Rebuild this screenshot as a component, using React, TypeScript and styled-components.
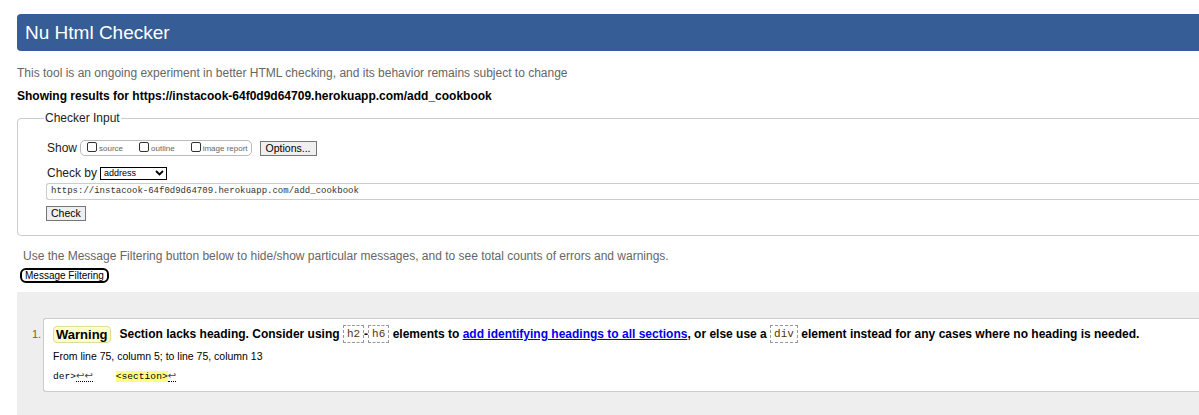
import React from "react";
import styled, { createGlobalStyle } from "styled-components";

const Global = createGlobalStyle`
  html, body { margin: 0; padding: 0; background: #fff; overflow: hidden; }
  body { font-family: "Liberation Sans", Arial, sans-serif; width: 1199px; height: 415px; }
`;

const Page = styled.div`
  width: 1300px;
  padding: 14px 0 0 17px;
  box-sizing: border-box;
`;

const Header = styled.h1`
  margin: 0;
  height: 37px;
  background: #365d95;
  border-radius: 4px 0 0 4px;
  color: #fff;
  font-size: 19px;
  font-weight: normal;
  line-height: 37px;
  padding-left: 8px;
`;

const Intro = styled.p`
  margin: 15px 0 0 0;
  font-size: 12px;
  color: #666;
  line-height: 14px;
`;

const Results = styled.p`
  margin: 9px 0 0 0;
  font-size: 12px;
  font-weight: bold;
  color: #000;
  line-height: 14px;
`;

const Fieldset = styled.fieldset`
  margin: 8px 0 0 0;
  border: 1px solid #ccc;
  border-radius: 4px;
  padding: 6px 0 14px 29px;
  min-width: 0;
`;

const Legend = styled.legend`
  font-size: 12px;
  color: #222;
  margin-left: -3px;
  padding: 0 1px;
`;

const Row = styled.div<{ $mt?: number }>`
  display: flex;
  align-items: center;
  margin-top: ${(p) => p.$mt ?? 0}px;
`;

const Label = styled.span`
  font-size: 12px;
  color: #222;
  margin-right: 3px;
`;

const CheckGroup = styled.span`
  display: inline-flex;
  align-items: center;
  border: 1px solid #bbb;
  border-radius: 5px;
  height: 14px;
  padding: 0 3px 0 6px;
  gap: 16px;
  margin-right: 8px;
`;

const CheckItem = styled.label`
  display: inline-flex;
  align-items: center;
  font-size: 8px;
  color: #666;
`;

const Box = styled.span`
  display: inline-block;
  width: 8px;
  height: 8px;
  border: 1px solid #333;
  border-radius: 2px;
  margin-right: 2px;
  position: relative;
  top: -1px;
`;

const Btn = styled.button`
  font-family: "Liberation Sans", Arial, sans-serif;
  font-size: 10.5px;
  color: #000;
  background: #efefef;
  border: 1px solid #767676;
  border-radius: 0;
  padding: 0 5px;
  height: 15px;
  line-height: 13px;
`;

const Select = styled.span`
  display: inline-flex;
  align-items: center;
  justify-content: space-between;
  width: 60px;
  height: 11px;
  border: 1px solid #000;
  font-size: 9px;
  color: #000;
  padding: 0 2px 0 3px;
`;

const UrlInput = styled.div`
  margin-top: 3px;
  margin-left: -1px;
  height: 15px;
  border: 1px solid #ccc;
  border-radius: 3px 0 0 3px;
  border-right: none;
  font-family: "Liberation Mono", monospace;
  font-size: 9px;
  line-height: 15px;
  padding-left: 4px;
  color: #333;
`;

const CheckBtn = styled(Btn)`
  margin-top: 6px;
  margin-left: -1px;
  height: 15px;
  padding: 0 4px;
`;

const Note = styled.p`
  margin: 13px 0 0 6px;
  font-size: 12px;
  color: #666;
  line-height: 14px;
`;

const FilterBtn = styled.button`
  margin: 5px 0 0 3px;
  font-family: "Liberation Sans", Arial, sans-serif;
  font-size: 10px;
  color: #000;
  background: #fff;
  border: 2px solid #000;
  border-radius: 6px;
  height: 15px;
  line-height: 10px;
  padding: 0 3px;
`;

const Results2 = styled.div`
  margin-top: 9px;
  background: #eee;
  height: 140px;
  padding-top: 26px;
  box-sizing: border-box;
`;

const List = styled.ol`
  margin: 0;
  padding: 0 0 0 26px;
  color: #886600;
  font-size: 11px;
`;

const Item = styled.li`
  background: #fff;
  border: 1px solid #ccc;
  border-radius: 3px 0 0 3px;
  border-right: none;
  padding: 6px 0 8px 9px;
  color: #000;
  list-style: none;
  position: relative;
`;

const Num = styled.span`
  position: absolute;
  left: -12px;
  top: 9px;
  font-size: 11px;
  color: #886600;
`;

const MsgLine = styled.p`
  margin: 0;
  font-size: 12px;
  font-weight: bold;
  line-height: 18px;
  display: flex;
  align-items: center;
  white-space: pre;
`;

const Badge = styled.span`
  display: inline-block;
  background: #ffc;
  border: 1px solid #dd9;
  border-radius: 4px;
  font-size: 13px;
  font-weight: bold;
  padding: 0 2px;
  height: 15px;
  line-height: 15px;
  margin-right: 9px;
`;

const Code = styled.code`
  display: inline-block;
  font-family: "Liberation Mono", monospace;
  font-weight: normal;
  font-size: 11px;
  color: #553300;
  border: 1px dashed #999;
  padding: 0 3px;
  height: 16px;
  line-height: 16px;
`;

const Link = styled.a`
  color: #00e;
  text-decoration: underline;
`;

const Location = styled.p`
  margin: 7px 0 0 0;
  font-size: 10.5px;
  color: #000;
  line-height: 12px;
`;

const Extract = styled.p`
  margin: 7px 0 0 0;
  font-family: "Liberation Mono", monospace;
  font-size: 9.6px;
  color: #000;
  line-height: 13px;
  white-space: pre;
`;

const Lf = styled.span`
  border-bottom: 1px dotted #000;
  color: #444;
  font-family: "DejaVu Sans", sans-serif;
  font-size: 10px;
`;

const Mark = styled.mark`
  background: #ffff80;
  color: #000;
`;

function Chevron() {
  return (
    <svg width="9" height="6" viewBox="0 0 9 6">
      <path d="M1 1 L4.5 4.5 L8 1" fill="none" stroke="#000" strokeWidth="1.8" />
    </svg>
  );
}

export default function App() {
  return (
    <>
      <Global />
      <Page>
        <Header>Nu Html Checker</Header>
        <Intro>This tool is an ongoing experiment in better HTML checking, and its behavior remains subject to change</Intro>
        <Results>Showing results for https://instacook-64f0d9d64709.herokuapp.com/add_cookbook</Results>
        <Fieldset>
          <Legend>Checker Input</Legend>
          <Row $mt={9}>
            <Label>Show</Label>
            <CheckGroup>
              <CheckItem><Box />source</CheckItem>
              <CheckItem><Box />outline</CheckItem>
              <CheckItem><Box />image report</CheckItem>
            </CheckGroup>
            <Btn>Options...</Btn>
          </Row>
          <Row $mt={10}>
            <Label>Check by</Label>
            <Select>address<Chevron /></Select>
          </Row>
          <UrlInput>https://instacook-64f0d9d64709.herokuapp.com/add_cookbook</UrlInput>
          <CheckBtn>Check</CheckBtn>
        </Fieldset>
        <Note>Use the Message Filtering button below to hide/show particular messages, and to see total counts of errors and warnings.</Note>
        <FilterBtn>Message Filtering</FilterBtn>
        <Results2>
          <List>
            <Item>
              <Num>1.</Num>
              <MsgLine>
                <Badge>Warning</Badge>Section lacks heading. Consider using <Code>h2</Code>-<Code>h6</Code> elements to{" "}
                <Link href="#">add identifying headings to all sections</Link>, or else use a <Code>div</Code> element instead for any cases where no heading is needed.
              </MsgLine>
              <Location>From line 75, column 5; to line 75, column 13</Location>
              <Extract>der&gt;<Lf>↩↩</Lf>    <Mark>&lt;section&gt;</Mark><Lf>↩</Lf></Extract>
            </Item>
          </List>
        </Results2>
      </Page>
    </>
  );
}
